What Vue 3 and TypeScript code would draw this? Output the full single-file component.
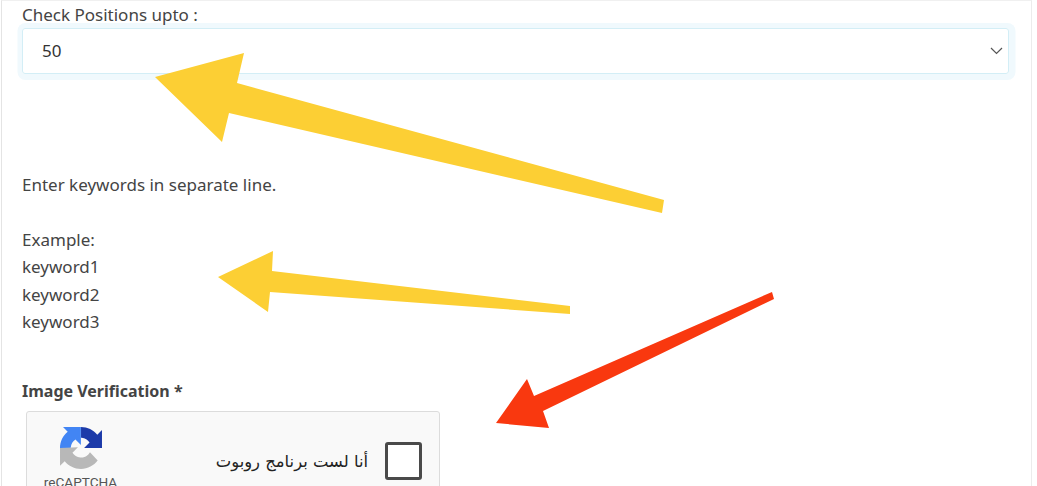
<script setup lang="ts">
const lines: string[] = ['keyword1', 'keyword2', 'keyword3']
</script>

<template>
  <div class="page">
    <main class="panel">
      <label class="label">Check Positions upto :</label>
      <div class="select">
        <span>50</span>
        <svg class="chev" viewBox="0 0 13 8" width="13" height="8" aria-hidden="true">
          <path d="M1 1 6.5 6.5 12 1" fill="none" stroke="#555" stroke-width="1.2" />
        </svg>
      </div>
      <div class="help">
        <p>Enter keywords in separate line.</p>
        <p class="example">Example:</p>
        <p v-for="l in lines" :key="l">{{ l }}</p>
      </div>
      <h4 class="title">Image Verification *</h4>
      <div class="captcha">
        <div class="brand">
          <svg class="logo" viewBox="0 0 64 64" width="42" height="42" aria-hidden="true">
            <path d="M64 31.955l-.033-1.37V4.687l-7.16 7.16C50.948 4.674 42.033.093 32.05.093v16.27c.485 0 .86.057 1.135.163 4.976.393 9.288 3.14 11.828 7.124l-8.307 8.307 27.294-.002" fill="#1c3aa9" />
            <path d="M31.862 0l-1.37.033H4.594l7.16 7.16C4.58 13.05 0 21.967 0 31.95h16.26c0-.485.057-.86.163-1.135.393-4.976 3.14-9.288 7.124-11.828l8.307 8.307L31.862 0" fill="#4285f4" />
            <path d="M.001 31.955l.033 1.37v25.9l7.16-7.16c5.86 7.173 14.775 11.754 24.76 11.754 10.4 0 19.621-4.96 25.457-12.64L45.674 38.32c-1.15 2.128-2.788 3.956-4.754 5.334-2.05 1.6-4.952 2.906-8.968 2.906-.485 0-.86-.057-1.135-.163-4.976-.393-9.288-3.14-11.828-7.124l8.307-8.307L0 31.955" fill="#b8b8b8" />
          </svg>
          <span class="brand-name">reCAPTCHA</span>
        </div>
        <span class="robot" dir="rtl">أنا لست برنامج روبوت</span>
        <span class="check"></span>
      </div>
    </main>
    <svg class="arrows" viewBox="0 0 1037 486" width="1037" height="486" aria-hidden="true">
      <polygon fill="#fccf34" points="155,77 244,53 237,83 664,200 662,213 229,113 222,142" />
      <polygon fill="#fccf34" points="218,277 273,251 272,271 570,306 570,314 270,292 268,312" />
      <polygon fill="#f9380f" points="496,423 527,379 534,396 772,292 774,299 543,411 549,428" />
    </svg>
  </div>
</template>

<style scoped>
.page {
  position: relative;
  width: 1037px;
  height: 486px;
  overflow: hidden;
  background: #fff;
  font-family: "Noto Sans", sans-serif;
  color: #444;
}
.panel {
  box-sizing: border-box;
  margin: 0 5px 0 1px;
  height: 486px;
  padding: 1px 21px 0 20px;
  border-left: 1px solid #e4e4e4;
  border-right: 1px solid #ececec;
  border-top: 1px solid #f0f0f0;
  font-size: 17px;
  line-height: 27.4px;
}
.label {
  display: block;
  height: 26px;
  line-height: 25px;
}
.select {
  box-sizing: border-box;
  width: 987px;
  height: 46px;
  display: flex;
  align-items: center;
  justify-content: space-between;
  padding: 0 5px 0 19px;
  border: 1px solid #d3eef6;
  border-radius: 3px;
  box-shadow: 1px 0.5px 0 5.5px #f0f9fd;
  color: #333;
}
.help {
  margin-top: 97px;
}
.help p {
  margin: 0;
}
.help .example {
  margin-top: 27.4px;
}
.title {
  margin: 43px 0 0;
  font-size: 16px;
  line-height: 27px;
  font-weight: 700;
}
.captcha {
  box-sizing: border-box;
  width: 414px;
  height: 100px;
  margin: 6px 0 0 4px;
  display: flex;
  align-items: flex-start;
  background: #f9f9f9;
  border: 1px solid #dcdcdc;
  border-radius: 3px;
}
.brand {
  width: 107px;
  display: flex;
  flex-direction: column;
  align-items: center;
  padding-top: 15px;
}
.logo {
  display: block;
}
.brand-name {
  margin-top: 5px;
  font-family: Roboto, sans-serif;
  font-size: 13.6px;
  line-height: 16px;
  color: #555;
}
.robot {
  margin: 40px 0 0 auto;
  font-family: "DejaVu Sans", sans-serif;
  font-size: 16.4px;
  line-height: 20px;
  color: #222;
}
.check {
  box-sizing: border-box;
  flex: none;
  width: 37px;
  height: 38px;
  margin: 30px 17px 0 17px;
  border: 3px solid #4a4a4a;
  border-radius: 3px;
  background: #fff;
}
.arrows {
  position: absolute;
  inset: 0;
  pointer-events: none;
}
</style>
